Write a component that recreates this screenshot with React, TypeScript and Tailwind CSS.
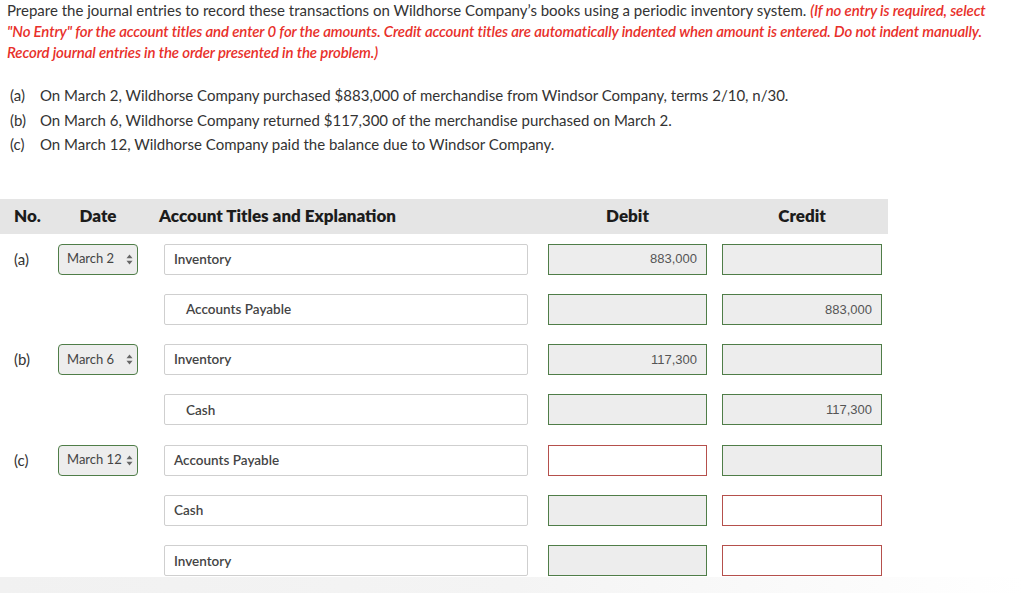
import React from 'react';

// ─── Journal rows (status drives the field border colour) ─────────────────────
type Field = { value: string; ok: boolean };

interface Row {
  no?: string;
  date?: string;
  account: string;
  indent?: boolean;
  debit: Field;
  credit: Field;
}

const ROWS: Row[] = [
  { no: '(a)', date: 'March 2', account: 'Inventory', debit: { value: '883,000', ok: true }, credit: { value: '', ok: true } },
  { account: 'Accounts Payable', indent: true, debit: { value: '', ok: true }, credit: { value: '883,000', ok: true } },
  { no: '(b)', date: 'March 6', account: 'Inventory', debit: { value: '117,300', ok: true }, credit: { value: '', ok: true } },
  { account: 'Cash', indent: true, debit: { value: '', ok: true }, credit: { value: '117,300', ok: true } },
  { no: '(c)', date: 'March 12', account: 'Accounts Payable', debit: { value: '', ok: false }, credit: { value: '', ok: true } },
  { account: 'Cash', debit: { value: '', ok: true }, credit: { value: '', ok: false } },
  { account: 'Inventory', debit: { value: '', ok: true }, credit: { value: '', ok: false } },
];

const TRANSACTIONS = [
  ['(a)', 'On March 2, Wildhorse Company purchased $883,000 of merchandise from Windsor Company, terms 2/10, n/30.'],
  ['(b)', 'On March 6, Wildhorse Company returned $117,300 of the merchandise purchased on March 2.'],
  ['(c)', 'On March 12, Wildhorse Company paid the balance due to Windsor Company.'],
];

const SortArrows = () => (
  <svg width="7" height="11" viewBox="0 0 7 11" className="shrink-0">
    <path d="M3.5 0.5 L6.5 4.2 L0.5 4.2 Z" fill="#666" />
    <path d="M3.5 10.5 L6.5 6.8 L0.5 6.8 Z" fill="#666" />
  </svg>
);

const AmountBox: React.FC<{ field: Field; width: string }> = ({ field, width }) => (
  <div
    className={`${width} h-[31px] flex items-center justify-end pr-[9px] border-[1.5px] text-[13px] text-[#555] ${
      field.ok ? 'bg-[#ededed] border-[#4f7d48]' : 'bg-white border-[#b5504c]'
    }`}
    style={{ fontFamily: '"Liberation Sans", Arial, sans-serif' }}
  >
    {field.value}
  </div>
);

export default function App() {
  return (
    <div
      className="relative min-h-[593px] bg-white text-[#333] overflow-hidden"
      style={{ fontFamily: 'Lato, "Open Sans", sans-serif' }}
    >
      <p className="pl-[7px] pr-[20px] text-[15px] leading-[21px]">
        Prepare the journal entries to record these transactions on Wildhorse Company’s books using a periodic inventory system.{' '}
        <em className="font-semibold text-[#e8302a] tracking-[-0.12px]">
          (If no entry is required, select "No Entry" for the account titles and enter 0 for the amounts. Credit account titles are automatically indented when amount is entered. Do not indent manually. Record journal entries in the order presented in the problem.)
        </em>
      </p>

      <ul className="mt-[20px] text-[15px] leading-[24.5px]">
        {TRANSACTIONS.map(([label, text]) => (
          <li key={label} className="flex">
            <span className="w-[40px] pl-[10px] shrink-0">{label}</span>
            <span>{text}</span>
          </li>
        ))}
      </ul>

      <div className="mt-[42px] w-[888px]">
        <div className="flex items-center h-[35px] bg-[#e5e5e5] font-extrabold text-[17px] text-[#1c1c1c]">
          <div className="w-[58px] pl-[14px]">No.</div>
          <div className="w-[80px] text-center">Date</div>
          <div className="w-[390px] pl-[21px]">Account Titles and Explanation</div>
          <div className="w-[179px] pl-[20px] text-center">Debit</div>
          <div className="w-[175px] pl-[15px] text-center">Credit</div>
        </div>

        <div className="mt-[10px] flex flex-col gap-[19.3px]">
          {ROWS.map((row, i) => (
            <div key={i} className="flex items-center">
              <div className="w-[58px] pl-[14px] text-[15px]">{row.no}</div>
              <div className="w-[80px]">
                {row.date && (
                  <div className="h-[31px] flex items-center justify-between pl-[8px] pr-[4px] rounded-[4px] border-[1.5px] border-[#4f7d48] bg-[#ededed] text-[13px] text-[#444]">
                    <span>{row.date}</span>
                    <SortArrows />
                  </div>
                )}
              </div>
              <div
                className={`ml-[26px] w-[364px] h-[31px] flex items-center border border-[#cfcfcf] rounded-[2px] bg-white text-[13.5px] font-semibold text-[#444] ${
                  row.indent ? 'pl-[21px]' : 'pl-[9px]'
                }`}
              >
                {row.account}
              </div>
              <div className="ml-[20px]">
                <AmountBox field={row.debit} width="w-[159px]" />
              </div>
              <div className="ml-[15px]">
                <AmountBox field={row.credit} width="w-[160px]" />
              </div>
            </div>
          ))}
        </div>
      </div>

      <div className="pointer-events-none absolute bottom-0 left-0 w-full h-[16px] bg-gradient-to-r from-[#f1f1f1] via-[#f4f4f4] to-transparent" />
    </div>
  );
}
